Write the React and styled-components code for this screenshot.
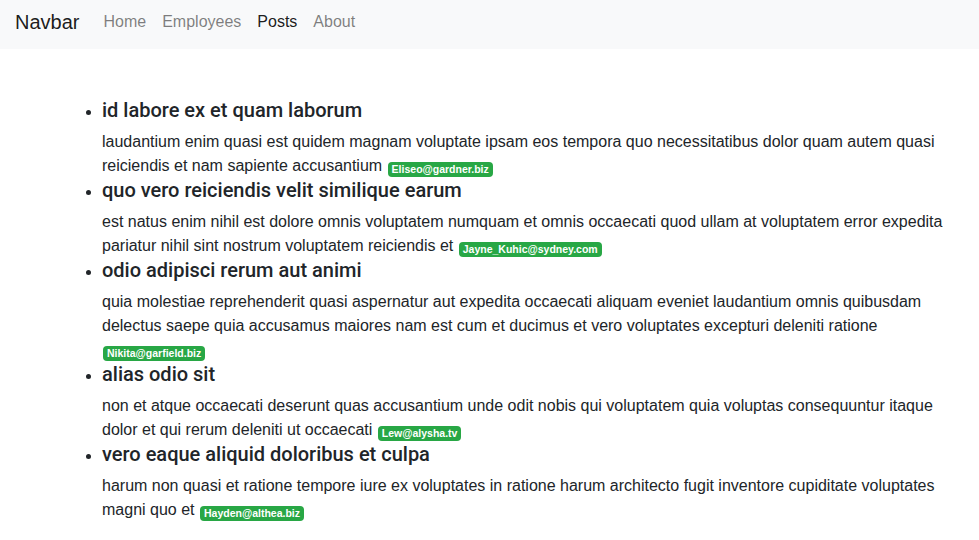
import React from "react";
import styled, { createGlobalStyle } from "styled-components";

const GlobalStyle = createGlobalStyle`
  html, body { margin: 0; padding: 0; background: #fff; }
  body {
    font-family: "Liberation Sans", Arial, sans-serif;
    font-size: 16px;
    line-height: 1.5;
    color: #212529;
  }
  * { box-sizing: border-box; }
`;

const NavBar = styled.nav`
  display: flex;
  align-items: center;
  height: 49px;
  padding: 0 15px;
  background: #f8f9fa;
`;

const Brand = styled.a`
  font-size: 20px;
  line-height: 30px;
  color: rgba(0, 0, 0, 0.9);
  text-decoration: none;
  margin-right: 16px;
  margin-top: -6px;
`;

const NavList = styled.div`
  display: flex;
  align-items: center;
  margin-top: -6px;
`;

const NavLink = styled.a`
  padding: 0 8px;
  font-size: 16px;
  line-height: 24px;
  text-decoration: none;
  color: ${(p) => (p.$active ? "rgba(0,0,0,0.9)" : "rgba(0,0,0,0.5)")};
`;

const PostList = styled.ul`
  margin: 49px 0 0 70px;
  padding: 0 14px 0 32px;
  list-style: disc;
`;

const PostItem = styled.li`
  &::marker { font-size: 16px; }
`;

const Title = styled.h5`
  margin: 0 0 8px;
  font-family: Roboto, "Liberation Sans", Arial, sans-serif;
  font-size: 20px;
  font-weight: 500;
  line-height: 24px;
`;

const Body = styled.p`
  margin: 0;
  font-size: 16px;
  line-height: 24px;
`;

const Badge = styled.span`
  display: inline-block;
  margin-left: 1px;
  padding: 2px 4px;
  font-size: 10.5px;
  font-weight: 700;
  line-height: 1;
  color: #fff;
  background: #28a745;
  border-radius: 4px;
  vertical-align: -2px;
  white-space: nowrap;
`;

const posts = [
  {
    title: "id labore ex et quam laborum",
    body:
      "laudantium enim quasi est quidem magnam voluptate ipsam eos tempora quo necessitatibus dolor quam autem quasi reiciendis et nam sapiente accusantium",
    email: "Eliseo@gardner.biz",
  },
  {
    title: "quo vero reiciendis velit similique earum",
    body:
      "est natus enim nihil est dolore omnis voluptatem numquam et omnis occaecati quod ullam at voluptatem error expedita pariatur nihil sint nostrum voluptatem reiciendis et",
    email: "Jayne_Kuhic@sydney.com",
  },
  {
    title: "odio adipisci rerum aut animi",
    body:
      "quia molestiae reprehenderit quasi aspernatur aut expedita occaecati aliquam eveniet laudantium omnis quibusdam delectus saepe quia accusamus maiores nam est cum et ducimus et vero voluptates excepturi deleniti ratione",
    email: "Nikita@garfield.biz",
  },
  {
    title: "alias odio sit",
    body:
      "non et atque occaecati deserunt quas accusantium unde odit nobis qui voluptatem quia voluptas consequuntur itaque dolor et qui rerum deleniti ut occaecati",
    email: "Lew@alysha.tv",
  },
  {
    title: "vero eaque aliquid doloribus et culpa",
    body:
      "harum non quasi et ratione tempore iure ex voluptates in ratione harum architecto fugit inventore cupiditate voluptates magni quo et",
    email: "Hayden@althea.biz",
  },
];

export default function App() {
  return (
    <>
      <GlobalStyle />
      <NavBar>
        <Brand href="#">Navbar</Brand>
        <NavList>
          <NavLink href="#">Home</NavLink>
          <NavLink href="#">Employees</NavLink>
          <NavLink href="#" $active>Posts</NavLink>
          <NavLink href="#">About</NavLink>
        </NavList>
      </NavBar>
      <PostList>
        {posts.map((p) => (
          <PostItem key={p.email}>
            <Title>{p.title}</Title>
            <Body>
              {p.body} <Badge>{p.email}</Badge>
            </Body>
          </PostItem>
        ))}
      </PostList>
    </>
  );
}
